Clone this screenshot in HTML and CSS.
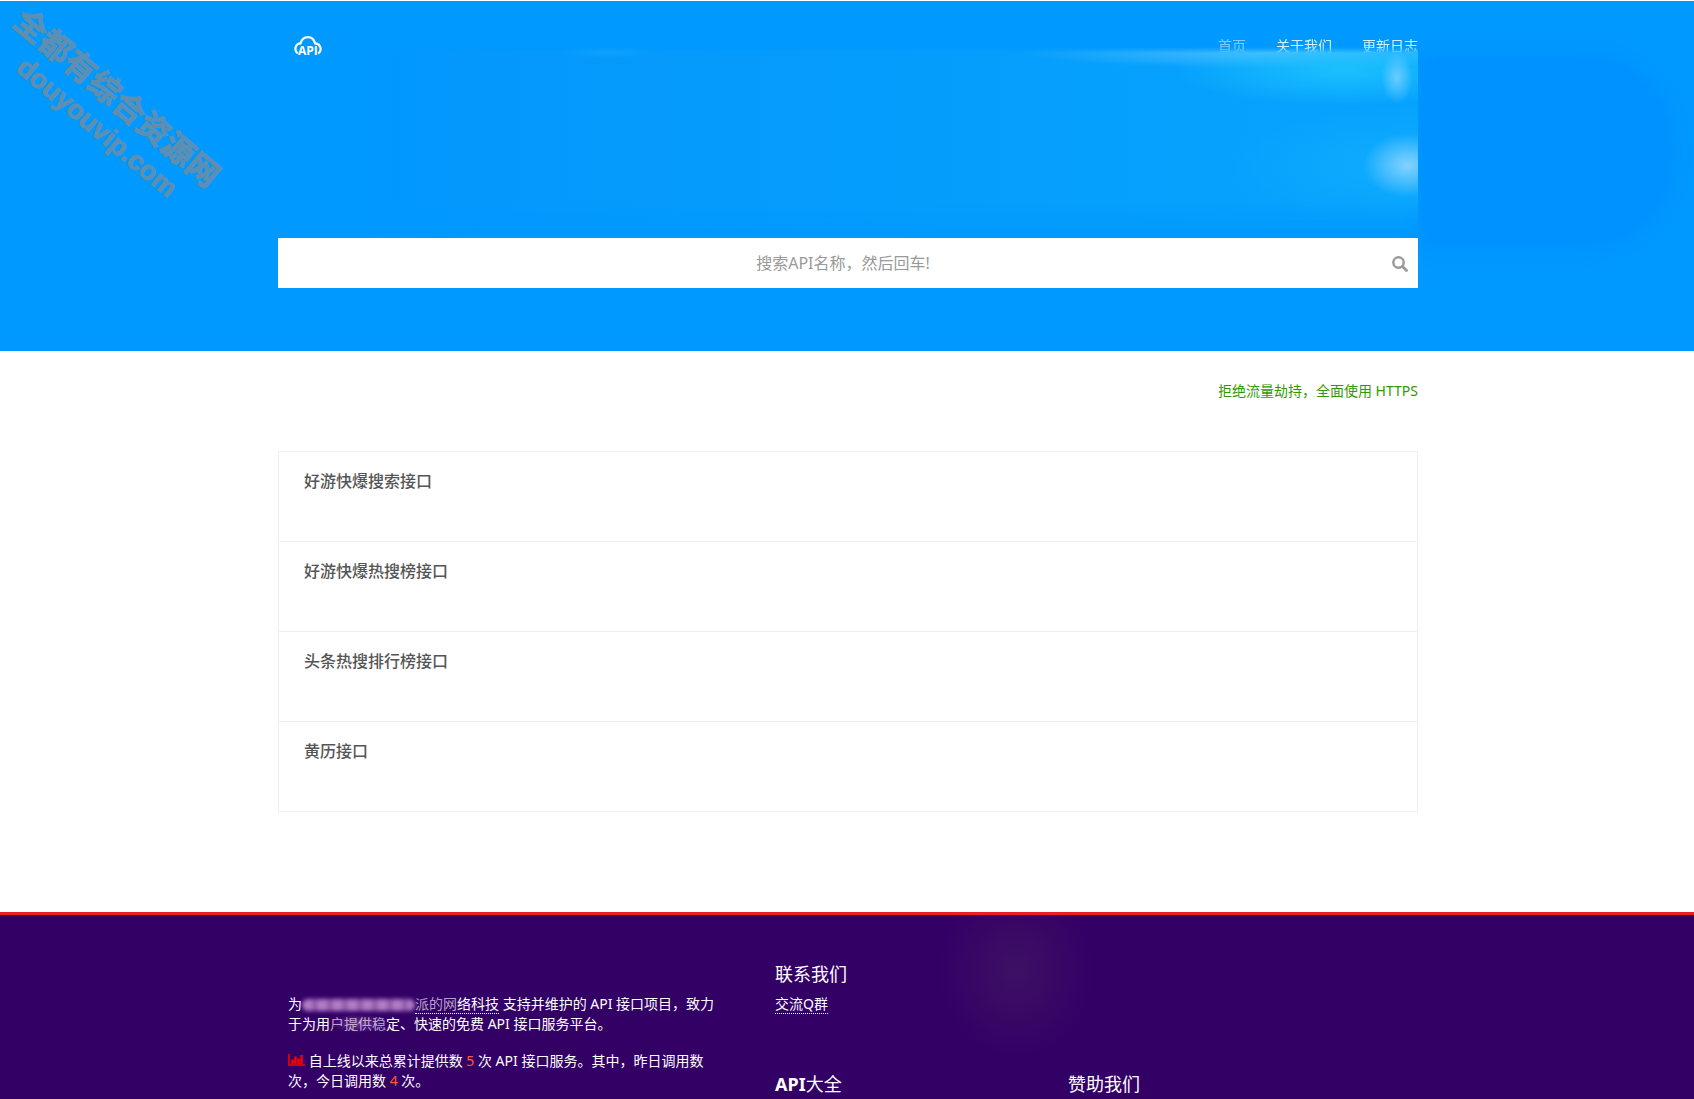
FILE: index.html
```html
<!DOCTYPE html>
<html lang="zh-CN">
<head>
<meta charset="utf-8">
<meta name="viewport" content="width=device-width, initial-scale=1">
<title>API</title>
<link rel="stylesheet" href="styles.css">
</head>
<body>
<header class="hero">
  <div class="container hero-inner">
    <div class="topbar">
      <a class="logo" href="#" aria-label="API">
        <svg width="28" height="24" viewBox="0 0 28 24">
          <path d="M3.800 17.500C-0.500 14 1.500 7.500 6.500 7.300C8 2.500 11.500 1.200 14 1.200C17.500 1.200 20 3.500 21 7.300C27.500 8 28 15 24.200 17.500" fill="none" stroke="#fff" stroke-width="2.200"/>
          <text x="4" y="19" class="logo-text">API</text>
        </svg>
      </a>
      <nav class="nav">
        <a class="faded" href="#">首页</a>
        <a href="#">关于我们</a>
        <a href="#">更新日志</a>
      </nav>
    </div>
    <form class="search">
      <input type="text" class="search-input" placeholder="搜索API名称，然后回车!" aria-label="搜索API名称">
      <button class="search-button" type="button" aria-label="搜索">
        <svg width="16" height="16" viewBox="0 0 16 16"><circle cx="6.500" cy="6.500" r="5.200" fill="none" stroke="#999" stroke-width="2.400"/><path d="M10.500 10.500L14.500 14.500" stroke="#999" stroke-width="2.800" stroke-linecap="round"/></svg>
      </button>
    </form>
    <div class="shade"></div>
    <div class="glow"></div>
  </div>
  <div class="stamp"><span class="stamp-name">全都有综合资源网</span><span class="stamp-site">douyouvip.com</span></div>
</header>
<main class="container main">
  <p class="notice">拒绝流量劫持，全面使用 HTTPS</p>
  <ul class="list">
    <li><a href="#">好游快爆搜索接口</a></li>
    <li><a href="#">好游快爆热搜榜接口</a></li>
    <li><a href="#">头条热搜排行榜接口</a></li>
    <li><a href="#">黄历接口</a></li>
  </ul>
</main>
<footer class="footer">
  <div class="container footer-grid">
    <section class="about">
      <p>为<span class="smear"></span><a class="dotted" href="#"><span class="worn">派的网</span>络科技</a> 支持并维护的 API 接口项目，致力于为用<span class="worn streak">户提供稳</span>定、快速的免费 API 接口服务平台。</p>
      <p><svg class="chart" width="17" height="12" viewBox="0 0 17 12"><path d="M1 0V11H17" fill="none" stroke="#f00" stroke-width="1.500"/><path d="M4.500 10V5.500M7.500 10V2.500M10.500 10V4.500M13.500 10V1" stroke="#f00" stroke-width="2.400"/></svg> 自上线以来总累计提供数 <span class="count">5</span> 次 API 接口服务。其中，昨日调用数 次，今日调用数 <span class="count">4</span> 次。</p>
    </section>
    <section class="contact">
      <h2>联系我们</h2>
      <a class="dotted" href="#">交流Q群</a>
    </section>
    <h2 class="all"><b>API</b>大全</h2>
    <h2 class="sponsor">赞助我们</h2>
  </div>
</footer>
</body>
</html>
```
FILE: styles.css
```css
* { box-sizing: border-box; }
body {
  margin: 0;
  padding-top: 1px;
  background: #fff;
  color: #555;
  font: 14px/20px "Noto Sans", "Noto Sans CJK SC", sans-serif;
}
a { color: inherit; text-decoration: none; }
.container { width: 100%; max-width: 1142px; margin: 0 auto; padding-left: 2px; }

/* Header */
.hero { position: relative; background: #09f; overflow: hidden; }
.hero-inner { position: relative; padding-top: 35px; padding-bottom: 63px; }
.topbar { display: flex; justify-content: space-between; height: 202px; }
.logo { margin-left: 16px; height: 24px; }
.logo-text { fill: #fff; font: bold 12px "Open Sans", sans-serif; }
.nav { display: flex; gap: 30px; color: #fff; }
.nav a { opacity: .85; }
.nav .faded { opacity: .5; }
.search { display: flex; position: relative; z-index: 1; height: 50px; background: #fff; }
.search-input {
  flex: 1;
  min-width: 0;
  padding: 0 0 0 26px;
  border: 0;
  outline: 0;
  background: none;
  color: #555;
  font: inherit;
  font-size: 16px;
  text-align: center;
}
.search-input::placeholder { color: #999; opacity: 1; }
.search-button { width: 36px; padding: 4px 0 0; border: 0; background: none; }
.shade {
  position: absolute;
  inset: 50px -260px 100px 1140px;
  border-radius: 0 90px 90px 0;
  background: #0090ff;
  filter: blur(8px);
  opacity: .7;
}
.glow {
  position: absolute;
  inset: 46px 0 113px 90px;
  pointer-events: none;
  background:
    radial-gradient(16px 26px at 98% 16%, #8ad4ffbb, #8ad4ff00),
    radial-gradient(44px 32px at 99% 62%, #96d8ffdd, #96d8ff00),
    radial-gradient(170px 36px at 93% 12%, #20c8ffcc, #20c8ff00),
    radial-gradient(260px 16px at 87% 3%, #5cc4ffcc, #5cc4ff00),
    radial-gradient(190px 60px at 100% 62%, #18b4ff99, #18b4ff00),
    radial-gradient(50px 8px at 23% 2%, #10a8ffcc, #10a8ff00),
    linear-gradient(90deg, #0498fc00, #0498fc 10%, #06a2fd 90%);
  -webkit-mask-image: linear-gradient(#0000, #000 6px, #000 80%, #0000);
  mask-image: linear-gradient(#0000, #000 6px, #000 80%, #0000);
}
.stamp {
  position: absolute;
  top: -1px;
  left: 32px;
  display: flex;
  flex-direction: column;
  color: #5c8fb3;
  font-weight: bold;
  white-space: nowrap;
  transform: rotate(40deg);
  transform-origin: 0 0;
  -webkit-text-stroke: 1px #5c8fb3;
}
.stamp-name { font-size: 32px; line-height: 40px; }
.stamp-site { padding-left: 32px; font: bold 27px/32px "Liberation Sans", sans-serif; }

/* API list */
.main { padding-top: 30px; padding-bottom: 100px; }
.notice { margin: 0 0 50px; color: #390; text-align: right; }
.list { margin: 0; padding: 0; list-style: none; border: 1px solid #ecf0f1; border-top: 0; }
.list li { height: 90px; padding: 17px 25px; border-top: 1px solid #ecf0f1; }
.list a { font-size: 16px; line-height: 24px; font-weight: 500; }

/* Footer */
.footer {
  border-top: 3px solid #ee1c25;
  background: radial-gradient(80px 90px at 60% 55px, #3e1064, #3e106400), #306;
  color: #fff;
}
.footer-grid {
  display: grid;
  grid-template-columns: 487fr 293fr 340fr;
  grid-template-rows: 110px auto;
  padding: 45px 10px 0 12px;
}
.about { grid-row: 1 / 3; max-width: 428px; padding-top: 34px; }
.about p { margin: 0 0 17px; }
.contact { grid-column: 2 / 4; }
.footer h2 { margin: 0; font-size: 18px; line-height: 28px; font-weight: 400; }
.contact h2 { margin-bottom: 6px; }
.all { grid-column: 2; }
.sponsor { grid-column: 3; }
.dotted { border-bottom: 1px dotted #fff; }
.count { color: #ff5c33; }
.worn { color: #ffffffa6; }
.streak { background: radial-gradient(closest-side, #8750a4aa, #8750a400); }
.smear {
  display: inline-block;
  width: 113px;
  height: 12px;
  vertical-align: -2px;
  border-radius: 6px;
  background: repeating-linear-gradient(90deg, #b07cc4 0 9px, #8750a4 13px 15px);
  filter: blur(2px);
}
```
